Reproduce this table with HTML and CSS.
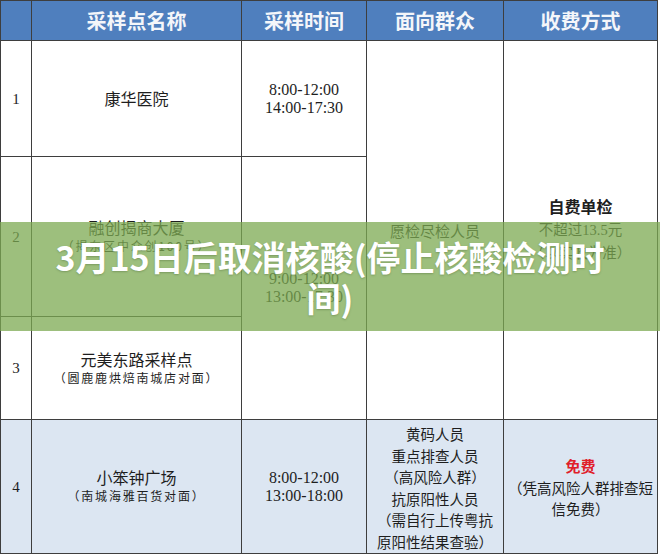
FILE: index.html
```html
<!DOCTYPE html>
<html lang="zh-CN">
<head>
<meta charset="utf-8">
<title>3月15日后取消核酸</title>
<link rel="stylesheet" href="styles.css">
</head>
<body>
<div class="page">
  <div class="table">
    <div class="cell head"></div>
    <div class="cell head">采样点名称</div>
    <div class="cell head">采样时间</div>
    <div class="cell head">面向群众</div>
    <div class="cell head">收费方式</div>

    <div class="cell num r1">1</div>
    <div class="cell name r1"><span class="main">康华医院</span></div>
    <div class="cell time r1"><span>8:00-12:00</span><span>14:00-17:30</span></div>
    <div class="cell crowd r123"><span class="main">愿检尽检人员</span></div>
    <div class="cell fee r123">
      <span class="strong">自费单检</span>
      <span>不超过13.5元</span>
      <span>（以实收为准）</span>
    </div>

    <div class="cell num r2">2</div>
    <div class="cell name r2"><span class="main">融创揭商大厦</span><span class="sub">（揭东区中众创100号）</span></div>
    <div class="cell time r23"><span>9:00-12:00</span><span>13:00-17:30</span></div>

    <div class="cell num r3">3</div>
    <div class="cell name r3"><span class="main">元美东路采样点</span><span class="sub">（圆鹿鹿烘焙南城店对面）</span></div>

    <div class="cell num r4 blue">4</div>
    <div class="cell name r4 blue"><span class="main">小笨钟广场</span><span class="sub">（南城海雅百货对面）</span></div>
    <div class="cell time r4 blue"><span>8:00-12:00</span><span>13:00-18:00</span></div>
    <div class="cell list r4 blue">
      <span>黄码人员</span>
      <span>重点排查人员</span>
      <span>（高风险人群）</span>
      <span>抗原阳性人员</span>
      <span>（需自行上传粤抗</span>
      <span>原阳性结果查验）</span>
    </div>
    <div class="cell list fee4 r4 blue">
      <span class="free">免费</span>
      <span>（凭高风险人群排查短</span>
      <span>信免费）</span>
    </div>
  </div>

  <div class="banner">
    <h1 class="title">3月15日后取消核酸(停止核酸检测时间)</h1>
  </div>
</div>
</body>
</html>
```

FILE: styles.css
```css
* { box-sizing: border-box; }

html, body {
  margin: 0;
  padding: 0;
  background: #ffffff;
}

body {
  width: 660px;
  height: 555px;
  overflow: hidden;
  font-family: "Liberation Serif", "Noto Sans CJK SC", serif;
  color: #1e1e1e;
}

.page {
  position: relative;
  width: 660px;
  height: 555px;
}

.table {
  display: grid;
  width: 658px;
  grid-template-columns: 30px 209px 124px 136px 153px;
  grid-template-rows: 39px 115px 159px 102px 133px;
  gap: 1px;
  padding: 1px;
  background: #3e3e3e;
}

.cell {
  background: #ffffff;
  display: flex;
  flex-direction: column;
  align-items: center;
  justify-content: center;
  text-align: center;
  font-size: 16px;
  line-height: 18px;
}

.head {
  background: #4f7fbe;
  color: #f4f6fa;
  font-family: "Noto Sans CJK SC", "Noto Sans", sans-serif;
  font-weight: 700;
  font-size: 20px;
  line-height: 24px;
}

.table > .head:nth-child(-n+5) { grid-row: 1; }

.num { grid-column: 1; font-size: 15px; }
.name { grid-column: 2; }
.time { grid-column: 3; }

.r1 { grid-row: 2; }
.r2 { grid-row: 3; }
.r3 { grid-row: 4; }
.r4 { grid-row: 5; }
.r23 { grid-row: 3 / 5; }
.r123 { grid-row: 2 / 5; }

.crowd { grid-column: 4; font-size: 15px; }
.fee { grid-column: 5; font-size: 14.5px; line-height: 23px; }
.fee .strong { font-size: 16px; font-weight: 700; }

.main {
  font-family: "Noto Sans CJK SC", serif;
  font-size: 16px;
  line-height: 19px;
}

.name .sub {
  font-family: "Noto Sans CJK SC", serif;
  font-size: 12px;
  letter-spacing: 1.8px;
  line-height: 18px;
}

.crowd .main { font-size: 15px; }

.list {
  grid-column: 4;
  font-family: "Noto Sans CJK SC", serif;
  font-size: 14.5px;
  line-height: 21.5px;
  padding-top: 2px;
}

.fee4 { grid-column: 5; }

.free {
  color: #e0202a;
  font-weight: 700;
  font-size: 15px;
}

.blue { background: #dce6f2; }

.banner {
  position: absolute;
  left: 0;
  top: 222px;
  width: 660px;
  height: 109px;
  background: rgba(124, 170, 82, 0.75);
  display: flex;
  align-items: center;
  justify-content: center;
}

.title {
  margin: 0;
  width: 562px;
  text-align: center;
  color: #ffffff;
  font-family: "Noto Sans CJK SC", "Noto Sans", sans-serif;
  font-weight: 700;
  font-size: 34px;
  line-height: 41px;
  text-shadow: 0 1px 2px rgba(60, 90, 40, 0.35);
}
```
